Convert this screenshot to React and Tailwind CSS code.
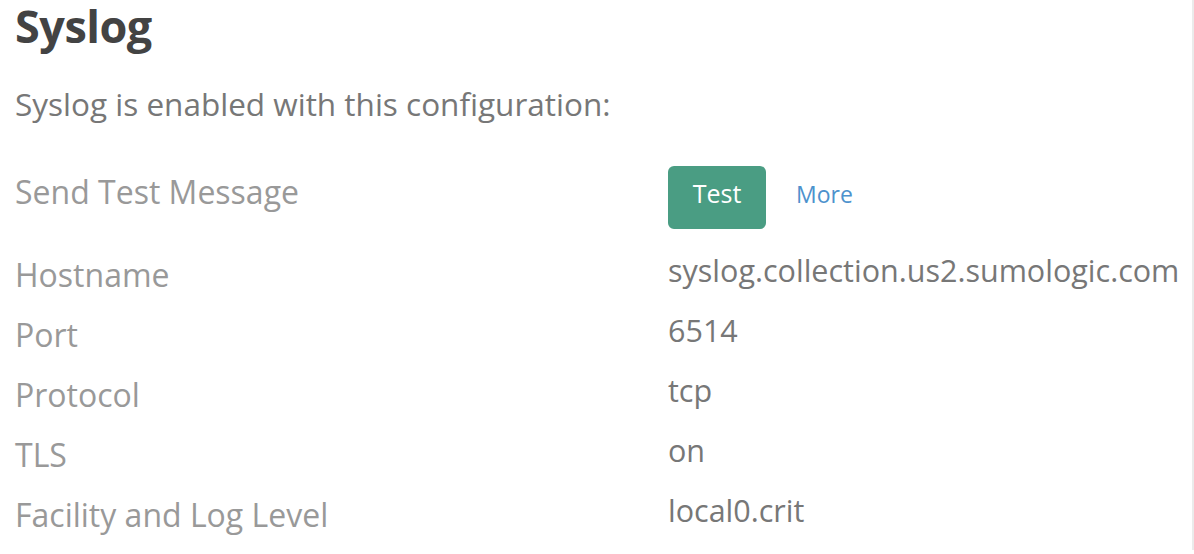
import React from 'react'

const rows = [
  { label: 'Hostname', value: 'syslog.collection.us2.sumologic.com' },
  { label: 'Port', value: '6514' },
  { label: 'Protocol', value: 'tcp' },
  { label: 'TLS', value: 'on' },
  { label: 'Facility and Log Level', value: 'local0.crit' },
]

export default function App() {
  return (
    <div className="w-[1194px] h-[554px] overflow-hidden bg-white">
      <div className="h-full border-r-2 border-[#ebebeb] pl-[15px] font-['Open_Sans',sans-serif]">
        <h1 className="-mt-[4px] text-[45px] font-bold text-[#434343] leading-[60px] tracking-[-0.5px]">Syslog</h1>

        <p className="mt-[28px] text-[31.5px] leading-[40px] text-[#777]">
          Syslog is enabled with this configuration:
        </p>

        {/* test message row */}
        <div className="mt-[42px] flex items-start h-[63px]">
          <div className="w-[653px] pt-[6px] text-[32px] leading-[40px] text-[#999]">Send Test Message</div>
          <button className="h-[63px] w-[98px] pt-[12px] rounded-[6px] bg-[#4a9d83] text-white text-[25px] leading-[30px] flex justify-center items-start">
            Test
          </button>
          <a className="ml-[30px] mt-[13px] text-[23px] leading-[30px] text-[#4d92cd] cursor-pointer">More</a>
        </div>

        <div className="mt-[21px] flex flex-col">
          {rows.map((r) => (
            <div key={r.label} className="flex items-start h-[60px]">
              <div className="w-[653px] pt-[5px] text-[32px] leading-[40px] text-[#999]">{r.label}</div>
              <div className="text-[30.5px] leading-[40px] text-[#777] whitespace-nowrap">{r.value}</div>
            </div>
          ))}
        </div>
      </div>
    </div>
  )
}
